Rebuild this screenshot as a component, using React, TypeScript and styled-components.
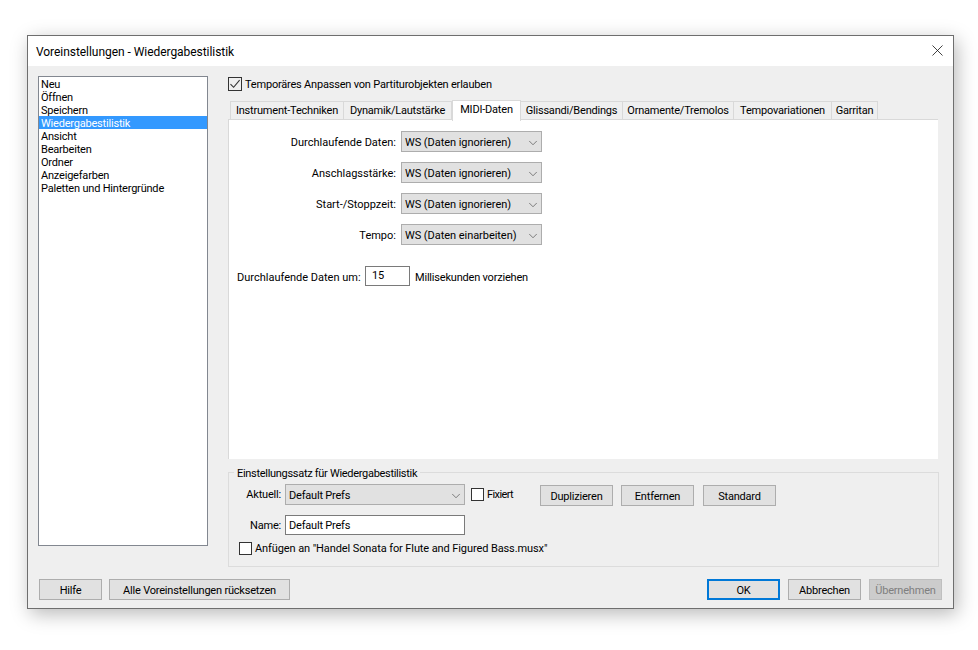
import React from "react";
import styled, { createGlobalStyle } from "styled-components";
import { ChevronDown, X } from "lucide-react";

const GlobalStyle = createGlobalStyle`
	html, body {
		margin: 0;
		background: #fff;
	}
	body {
		font-family: "Roboto", "Liberation Sans", sans-serif;
		font-size: 11px;
		letter-spacing: -0.2px;
		color: #000;
	}
	* {
		box-sizing: border-box;
	}
`;

const Page = styled.div`
	width: 978px;
	height: 650px;
	padding: 35px 0 0 27px;
	overflow: hidden;
`;

const Dialog = styled.div`
	width: 927px;
	height: 574px;
	display: flex;
	flex-direction: column;
	background: #efefef;
	border: 1px solid #6e6e6e;
	box-shadow: 3px 5px 18px rgba(0, 0, 0, 0.28);
`;

const TitleBar = styled.div`
	height: 30px;
	flex-shrink: 0;
	display: flex;
	align-items: center;
	justify-content: space-between;
	padding: 1px 6px 0 8px;
	background: #fff;
	font-size: 12px;
	letter-spacing: -0.05px;
`;

const CloseIcon = styled(X)`
	margin-top: -3px;
`;

const Body = styled.div`
	display: grid;
	grid-template-columns: 170px 711px;
	column-gap: 20px;
	padding: 10px 0 0 10px;
`;

const ListBox = styled.ul`
	height: 470px;
	margin: 0;
	padding: 0;
	list-style: none;
	background: #fff;
	border: 1px solid #828790;
`;

const ListItem = styled.li<{ $selected?: boolean }>`
	height: 13px;
	padding-left: 2px;
	line-height: 15px;
	white-space: nowrap;
	background: ${(p) => (p.$selected ? "#3399ff" : "transparent")};
	color: ${(p) => (p.$selected ? "#fff" : "#000")};
`;

const RightColumn = styled.div`
	display: flex;
	flex-direction: column;
	padding-top: 1px;
`;

const CheckRow = styled.label<{ $indent?: number; $top?: number }>`
	display: flex;
	align-items: center;
	gap: 3px;
	height: 14px;
	margin-left: ${(p) => p.$indent ?? 0}px;
	margin-top: ${(p) => p.$top ?? 0}px;
	white-space: nowrap;
`;

const Box = styled.span`
	width: 13px;
	height: 13px;
	flex-shrink: 0;
	display: flex;
	background: #fff;
	border: 1px solid #333;
`;

const TopBox = styled(Box)`
	width: 14px;
	height: 14px;
	background: #efefef;
`;

const TabStrip = styled.div`
	display: flex;
	align-items: flex-end;
	height: 21px;
	margin-top: 8px;
	padding-left: 2px;
	position: relative;
	z-index: 1;
`;

const Tab = styled.div<{ $active?: boolean; $width: number }>`
	width: ${(p) => p.$width}px;
	height: ${(p) => (p.$active ? 21 : 19)}px;
	margin-bottom: ${(p) => (p.$active ? -1 : 0)}px;
	padding-top: 1px;
	text-align: center;
	white-space: nowrap;
	line-height: 15px;
	background: ${(p) => (p.$active ? "#fff" : "#efefef")};
	border: 1px solid #d9d9d9;
	border-left-width: ${(p) => (p.$active ? 1 : 0)}px;
	border-bottom-width: ${(p) => (p.$active ? 0 : 1)}px;
	&:first-child {
		border-left-width: 1px;
	}
`;

const TabPanel = styled.div`
	width: 710px;
	height: 340px;
	margin-top: -1px;
	padding: 11px 0 0 0;
	background: #fff;
	border-top: 1px solid #d9d9d9;
	border-left: 1px solid #d9d9d9;
`;

const FieldGrid = styled.div`
	display: grid;
	grid-template-columns: 167px 141px;
	column-gap: 5px;
	row-gap: 10px;
	align-items: center;
`;

const FieldLabel = styled.span`
	padding-top: 2px;
	text-align: right;
	white-space: nowrap;
	letter-spacing: 0;
`;

const Combo = styled.div<{ $width?: number }>`
	width: ${(p) => p.$width ?? 141}px;
	height: 21px;
	flex-shrink: 0;
	display: flex;
	align-items: center;
	justify-content: space-between;
	padding: 2px 1px 0 3px;
	background: #e1e1e1;
	border: 1px solid #adadad;
	white-space: nowrap;
`;

const MidiCombo = styled(Combo)`
	letter-spacing: -0.05px;
`;

const SpinRow = styled.div`
	display: flex;
	align-items: center;
	height: 20px;
	margin-top: 21px;
	padding-left: 8px;
`;

const SpinLabel = styled.span`
	width: 128px;
	padding-top: 2px;
	white-space: nowrap;
	letter-spacing: 0;
`;

const SpinHint = styled.span`
	padding-top: 2px;
	white-space: nowrap;
`;

const TextField = styled.div<{ $width: number }>`
	width: ${(p) => p.$width}px;
	height: 20px;
	flex-shrink: 0;
	padding: 1px 3px 0;
	line-height: 18px;
	background: #fff;
	border: 1px solid #7a7a7a;
	white-space: nowrap;
`;

const NumberField = styled(TextField)`
	padding-top: 0;
	padding-left: 6px;
	margin-right: 5px;
`;

const Group = styled.div`
	position: relative;
	height: 95px;
	margin-top: 13px;
	padding-top: 11px;
	border: 1px solid #dcdcdc;
`;

const GroupTitle = styled.span`
	position: absolute;
	top: -6px;
	left: 5px;
	padding: 0 3px;
	line-height: 13px;
	letter-spacing: -0.3px;
	background: #efefef;
	white-space: nowrap;
`;

const GroupRow = styled.div`
	display: flex;
	align-items: center;
	height: 21px;
`;

const NameRow = styled(GroupRow)`
	height: 20px;
	margin-top: 10px;
`;

const GroupLabel = styled.span`
	width: 52px;
	margin-right: 4px;
	text-align: right;
	white-space: nowrap;
`;

const FixedCheck = styled(CheckRow)`
	width: 69px;
	letter-spacing: -0.6px;
`;

const AppendCheck = styled(CheckRow)`
	line-height: 15px;
	letter-spacing: -0.1px;
`;

const ButtonRow = styled.div`
	display: flex;
	gap: 8px;
`;

const Button = styled.div<{ $width?: number; $focused?: boolean; $disabled?: boolean; $nudge?: number }>`
	width: ${(p) => p.$width ?? 73}px;
	height: 21px;
	margin-left: ${(p) => p.$nudge ?? 0}px;
	padding-top: 2px;
	display: flex;
	align-items: center;
	justify-content: center;
	white-space: nowrap;
	background: ${(p) => (p.$disabled ? "#cccccc" : "#e1e1e1")};
	color: ${(p) => (p.$disabled ? "#7f7f7f" : "#000")};
	border: ${(p) => (p.$focused ? "2px solid #0078d7" : "1px solid #adadad")};
	border-color: ${(p) => (p.$disabled ? "#bfbfbf" : p.$focused ? "#0078d7" : "#adadad")};
`;

const GroupButtons = styled(ButtonRow)`
	margin-top: 1px;
`;

const Footer = styled.div`
	display: flex;
	justify-content: space-between;
	margin-top: 12px;
	padding: 0 11px;
`;

const categories = [
	"Neu",
	"Öffnen",
	"Speichern",
	"Wiedergabestilistik",
	"Ansicht",
	"Bearbeiten",
	"Ordner",
	"Anzeigefarben",
	"Paletten und Hintergründe",
];

const tabs = [
	{ label: "Instrument-Techniken", width: 114 },
	{ label: "Dynamik/Lautstärke", width: 108 },
	{ label: "MIDI-Daten", width: 69, active: true },
	{ label: "Glissandi/Bendings", width: 102 },
	{ label: "Ornamente/Tremolos", width: 111 },
	{ label: "Tempovariationen", width: 98 },
	{ label: "Garritan", width: 46 },
];

const midiFields = [
	{ label: "Durchlaufende Daten:", value: "WS (Daten ignorieren)" },
	{ label: "Anschlagsstärke:", value: "WS (Daten ignorieren)" },
	{ label: "Start-/Stoppzeit:", value: "WS (Daten ignorieren)" },
	{ label: "Tempo:", value: "WS (Daten einarbeiten)" },
];

function Chevron() {
	return <ChevronDown size={14} strokeWidth={1.1} color="#444" />;
}

function CheckMark() {
	return (
		<svg width="12" height="12" viewBox="0 0 12 12" fill="none">
			<path d="M1.5 6.2 L4.6 9.3 L10.6 2.2" stroke="#333" strokeWidth="1.1" />
		</svg>
	);
}

export default function App(): JSX.Element {
	return (
		<Page>
			<GlobalStyle />
			<Dialog>
				<TitleBar>
					Voreinstellungen - Wiedergabestilistik
					<CloseIcon size={19} strokeWidth={1} color="#111" />
				</TitleBar>
				<Body>
					<ListBox>
						{categories.map((name) => (
							<ListItem key={name} $selected={name === "Wiedergabestilistik"}>
								{name}
							</ListItem>
						))}
					</ListBox>
					<RightColumn>
						<CheckRow>
							<TopBox>
								<CheckMark />
							</TopBox>
							Temporäres Anpassen von Partiturobjekten erlauben
						</CheckRow>
						<TabStrip>
							{tabs.map((tab) => (
								<Tab key={tab.label} $width={tab.width} $active={tab.active}>
									{tab.label}
								</Tab>
							))}
						</TabStrip>
						<TabPanel>
							<FieldGrid>
								{midiFields.map((field) => (
									<React.Fragment key={field.label}>
										<FieldLabel>{field.label}</FieldLabel>
										<MidiCombo>
											{field.value}
											<Chevron />
										</MidiCombo>
									</React.Fragment>
								))}
							</FieldGrid>
							<SpinRow>
								<SpinLabel>Durchlaufende Daten um:</SpinLabel>
								<NumberField $width={45}>15</NumberField>
								<SpinHint>Millisekunden vorziehen</SpinHint>
							</SpinRow>
						</TabPanel>
						<Group>
							<GroupTitle>Einstellungssatz für Wiedergabestilistik</GroupTitle>
							<GroupRow>
								<GroupLabel>Aktuell:</GroupLabel>
								<Combo $width={180}>
									Default Prefs
									<Chevron />
								</Combo>
								<FixedCheck $indent={6}>
									<Box />
									Fixiert
								</FixedCheck>
								<GroupButtons>
									<Button>Duplizieren</Button>
									<Button>Entfernen</Button>
									<Button $nudge={1}>Standard</Button>
								</GroupButtons>
							</GroupRow>
							<NameRow>
								<GroupLabel>Name:</GroupLabel>
								<TextField $width={180}>Default Prefs</TextField>
							</NameRow>
							<AppendCheck $indent={10} $top={6}>
								<Box />
								Anfügen an "Handel Sonata for Flute and Figured Bass.musx"
							</AppendCheck>
						</Group>
					</RightColumn>
				</Body>
				<Footer>
					<ButtonRow>
						<Button $width={63}>Hilfe</Button>
						<Button $width={181} $nudge={-1}>
							Alle Voreinstellungen rücksetzen
						</Button>
					</ButtonRow>
					<ButtonRow>
						<Button $focused>OK</Button>
						<Button>Abbrechen</Button>
						<Button $disabled>Übernehmen</Button>
					</ButtonRow>
				</Footer>
			</Dialog>
		</Page>
	);
}
